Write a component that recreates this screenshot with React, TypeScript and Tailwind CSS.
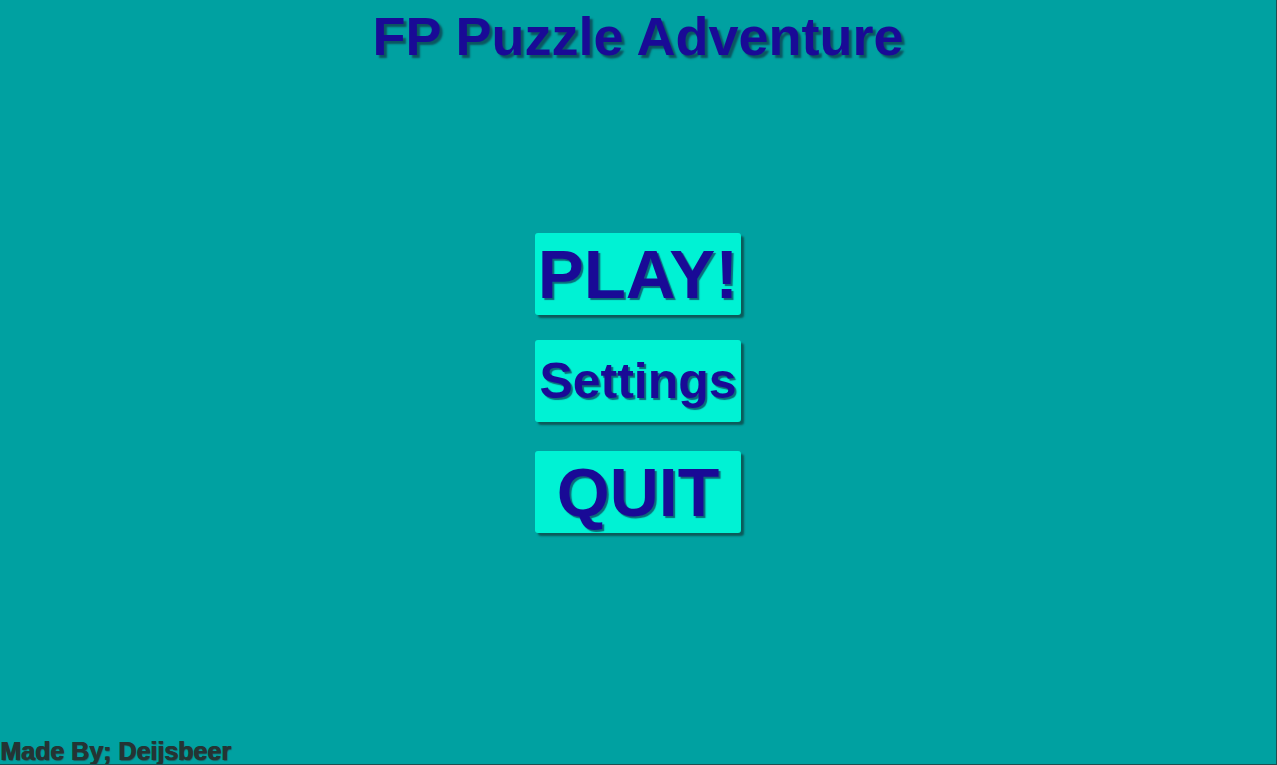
const font = { fontFamily: '"Liberation Sans", Arial, sans-serif' };

function MenuButton({ label, size, className }: { label: string; size: string; className?: string }) {
  return (
    <button
      className={`w-[206px] h-[82px] flex items-center justify-center bg-[#00f2d4] rounded-[3px] shadow-[3px_3px_2px_#0b5a5a] text-[#190a96] font-bold leading-none [text-shadow:2px_2px_1px_#0a6a7a] ${size} ${className ?? ''}`}
    >
      {label}
    </button>
  );
}

export default function App() {
  return (
    <div
      style={font}
      className="w-full h-[765px] bg-[#00a1a1] border-r border-b border-[#1e5050] flex flex-col overflow-hidden"
    >
      <h1 className="pt-[9px] text-center text-[54px] leading-none font-bold text-[#190a96] [text-shadow:3px_3px_2px_#0b5560]">
        FP Puzzle Adventure
      </h1>

      <div className="flex flex-col items-center mt-[170px]">
        <MenuButton label="PLAY!" size="text-[69px]" />
        <MenuButton label="Settings" size="text-[50px]" className="mt-[25px]" />
        <MenuButton label="QUIT" size="text-[68px]" className="mt-[29px]" />
      </div>

      <div className="mt-auto text-[25px] leading-none font-bold text-[#243434] [text-shadow:1px_0_0_#243434,1px_1px_1px_#1b5e5e]">
        Made By; Deijsbeer
      </div>
    </div>
  );
}
